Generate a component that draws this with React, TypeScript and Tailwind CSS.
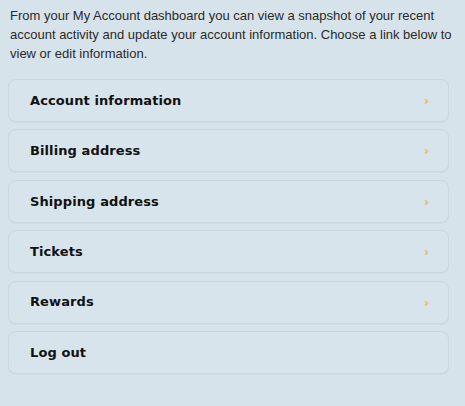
import React from "react";

const links = [
  { label: "Account information", arrow: true },
  { label: "Billing address", arrow: true },
  { label: "Shipping address", arrow: true },
  { label: "Tickets", arrow: true },
  { label: "Rewards", arrow: true },
  { label: "Log out", arrow: false },
];

export default function App() {
  return (
    <div className="min-h-[406px] w-[465px] bg-[#d7e3eb] px-[8px] pt-[6px] text-[#1d1d1d]">
      <p className="px-[2px] font-['Liberation_Sans',sans-serif] text-[13px] leading-[19px] text-[#2a2a2a]">
        From your My Account dashboard you can view a snapshot of your recent account activity and update your account
        information. Choose a link below to view or edit information.
      </p>
      <ul className="mt-[16px] flex w-[441px] flex-col gap-[7.4px] font-['DejaVu_Sans',sans-serif]">
        {links.map((l) => (
          <li
            key={l.label}
            className="flex h-[43px] items-center justify-between rounded-[8px] border border-[#cad7e0] bg-[#d8e4ec] pl-[21px] pr-[19px] shadow-[0_1px_1px_rgba(0,0,0,0.03)]"
          >
            <span className="text-[13px] font-bold tracking-[0.1px] text-[#111]">{l.label}</span>
            {l.arrow && <span className="text-[13px] font-bold leading-none text-[#e2b866]">›</span>}
          </li>
        ))}
      </ul>
    </div>
  );
}
